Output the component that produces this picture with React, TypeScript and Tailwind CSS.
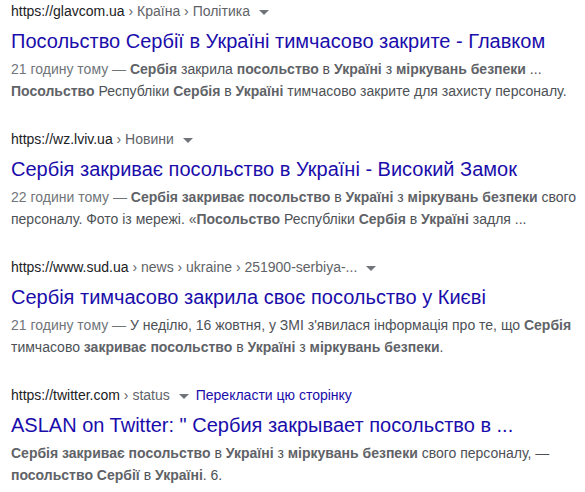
import React from "react";

type Part = string | { b: string };

interface ResultProps {
    url: string;
    crumbs: string[];
    title: string;
    date?: string;
    lines: Part[];
    translate?: boolean;
}

function Caret() {
    return (
        <svg width="10" height="5" viewBox="0 0 10 5" className="ml-[9px] inline-block align-middle">
            <path d="M0 0h10L5 5z" fill="#70757a" />
        </svg>
    );
}

function Result({ url, crumbs, title, date, lines, translate }: ResultProps) {
    return (
        <div>
            <div className="h-5 text-[14px] leading-5 whitespace-pre">
                <span className="text-[#202124]">{url}</span>
                {crumbs.map((c) => (
                    <span key={c} className="text-[#5f6368]">
                        {" › " + c}
                    </span>
                ))}
                <Caret />
                {translate && (
                    <span className="ml-[7px] text-[#1a0dab]">Перекласти цю сторінку</span>
                )}
            </div>
            <div className="mt-[7px] text-[20px] leading-[26px] text-[#1a0dab] whitespace-nowrap">
                {title}
            </div>
            <div className="mt-[4px] text-[14px] leading-[22px] text-[#4d5156]">
                {date && <span className="text-[#70757a]">{date} — </span>}
                {lines.map((p, i) =>
                    typeof p === "string" ? (
                        <span key={i}>{p}</span>
                    ) : (
                        <b key={i} className="font-bold text-[#5f6368]">
                            {p.b}
                        </b>
                    )
                )}
            </div>
        </div>
    );
}

export default function App() {
    return (
        <div
            className="w-[585px] h-[492px] bg-white overflow-hidden pt-[1px] pl-[11px] pr-[4px] flex flex-col gap-[27px]"
            style={{ fontFamily: '"Liberation Sans", Arial, sans-serif' }}
        >
            <Result
                url="https://glavcom.ua"
                crumbs={["Країна", "Політика"]}
                title="Посольство Сербії в Україні тимчасово закрите - Главком"
                date="21 годину тому"
                lines={[
                    { b: "Сербія" },
                    " закрила ",
                    { b: "посольство" },
                    " в ",
                    { b: "Україні" },
                    " з ",
                    { b: "міркувань безпеки" },
                    " ... ",
                    { b: "Посольство" },
                    " Республіки ",
                    { b: "Сербія" },
                    " в ",
                    { b: "Україні" },
                    " тимчасово закрите для захисту персоналу.",
                ]}
            />
            <Result
                url="https://wz.lviv.ua"
                crumbs={["Новини"]}
                title="Сербія закриває посольство в Україні - Високий Замок"
                date="22 години тому"
                lines={[
                    { b: "Сербія закриває посольство" },
                    " в ",
                    { b: "Україні" },
                    " з ",
                    { b: "міркувань безпеки" },
                    " свого персоналу. Фото із мережі. «",
                    { b: "Посольство" },
                    " Республіки ",
                    { b: "Сербія" },
                    " в ",
                    { b: "Україні" },
                    " задля ...",
                ]}
            />
            <Result
                url="https://www.sud.ua"
                crumbs={["news", "ukraine", "251900-serbiya-..."]}
                title="Сербія тимчасово закрила своє посольство у Києві"
                date="21 годину тому"
                lines={[
                    "У неділю, 16 жовтня, у ЗМІ з'явилася інформація про те, що ",
                    { b: "Сербія" },
                    " тимчасово ",
                    { b: "закриває посольство" },
                    " в ",
                    { b: "Україні" },
                    " з ",
                    { b: "міркувань безпеки" },
                    ".",
                ]}
            />
            <Result
                url="https://twitter.com"
                crumbs={["status"]}
                translate
                title={'ASLAN on Twitter: " Сербия закрывает посольство в ...'}
                lines={[
                    { b: "Сербія закриває посольство" },
                    " в ",
                    { b: "Україні" },
                    " з ",
                    { b: "міркувань безпеки" },
                    " свого персоналу, — ",
                    { b: "посольство Сербії" },
                    " в ",
                    { b: "Україні" },
                    ". 6.",
                ]}
            />
        </div>
    );
}
